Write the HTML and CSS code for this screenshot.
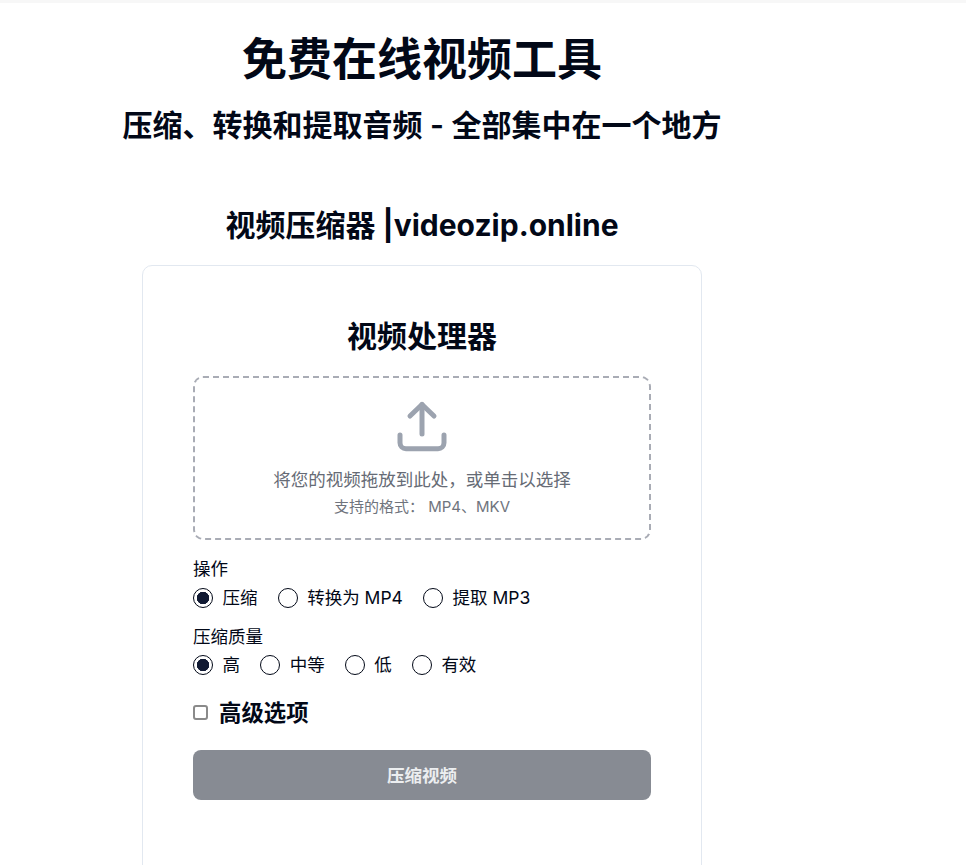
FILE: index.html
```html
<!DOCTYPE html>
<html lang="zh-CN">
<head>
  <meta charset="UTF-8">
  <meta name="viewport" content="width=device-width, initial-scale=1.0">
  <title>免费在线视频工具</title>
  <link rel="stylesheet" href="styles.css">
</head>
<body>
  <div class="page">
    <h1>免费在线视频工具</h1>
    <h2 class="subtitle">压缩、转换和提取音频 - 全部集中在一个地方</h2>
    <h2 class="site-name">视频压缩器 |videozip.online</h2>

    <div class="card">
      <h2 class="card-title">视频处理器</h2>

      <div class="dropzone">
        <svg class="upload-icon" viewBox="0 0 52 52" fill="none" stroke="#9ca3af" stroke-width="5" stroke-linecap="round" stroke-linejoin="round">
          <path d="M26 33V3.5"/>
          <path d="M14 15L26 3.5 38 15"/>
          <path d="M4 34v7.8a6 6 0 0 0 6 6h32a6 6 0 0 0 6-6V34"/>
        </svg>
        <p class="drop-text">将您的视频拖放到此处，或单击以选择</p>
        <p class="drop-hint">支持的格式： MP4、MKV</p>
      </div>

      <div class="field">
        <div class="field-label">操作</div>
        <div class="options">
          <label class="option"><input type="radio" name="action" checked> 压缩</label>
          <label class="option"><input type="radio" name="action"> 转换为 MP4</label>
          <label class="option"><input type="radio" name="action"> 提取 MP3</label>
        </div>
      </div>

      <div class="field">
        <div class="field-label">压缩质量</div>
        <div class="options">
          <label class="option"><input type="radio" name="quality" checked> 高</label>
          <label class="option"><input type="radio" name="quality"> 中等</label>
          <label class="option"><input type="radio" name="quality"> 低</label>
          <label class="option"><input type="radio" name="quality"> 有效</label>
        </div>
      </div>

      <label class="advanced"><input type="checkbox"> <span>高级选项</span></label>

      <button class="submit-btn" disabled>压缩视频</button>
    </div>
  </div>
</body>
</html>
```

FILE: styles.css
```css
* {
  box-sizing: border-box;
}
body {
  margin: 0;
  font-family: Inter, "Noto Sans CJK SC", sans-serif;
  color: #020817;
  background: #ffffff;
  border-top: 3px solid #f7f7f7;
}
.page {
  width: 844px;
  padding-top: 27px;
}
h1, h2, p {
  margin: 0;
  text-align: center;
}
h1 {
  font-size: 45px;
  line-height: 60px;
  font-weight: 700;
}
.subtitle {
  font-size: 30px;
  line-height: 40px;
  font-weight: 600;
  margin-top: 15px;
}
.site-name {
  font-size: 30px;
  line-height: 40px;
  font-weight: 700;
  margin-top: 60px;
}
.card {
  width: 560px;
  height: 640px;
  margin: 20px auto 0;
  padding: 50px;
  border: 1px solid #e2e8f0;
  border-radius: 10px;
}
.card-title {
  font-size: 30px;
  line-height: 40px;
  font-weight: 700;
}
.dropzone {
  margin-top: 20px;
  height: 164px;
  padding-top: 23px;
  border: 2px dashed #a9acb5;
  border-radius: 10px;
  text-align: center;
}
.upload-icon {
  display: block;
  width: 52px;
  height: 52px;
  margin: 0 auto;
}
.drop-text {
  font-size: 17.5px;
  line-height: 24px;
  color: #666b75;
  margin-top: 15px;
}
.drop-hint {
  font-size: 15px;
  line-height: 20px;
  color: #6f747d;
  margin-top: 5px;
}
.field {
  margin-top: 17px;
}
.field + .field {
  margin-top: 15px;
}
.field-label {
  font-size: 17.5px;
  line-height: 24px;
}
.options {
  display: flex;
  gap: 20px;
  margin-top: 5px;
}
.field + .field .options {
  margin-top: 4px;
}
.option {
  display: flex;
  align-items: center;
  gap: 9.6px;
  font-size: 17.5px;
  line-height: 24px;
}
.option input {
  appearance: none;
  width: 20px;
  height: 20px;
  margin: 0;
  border: 1px solid #020817;
  border-radius: 50%;
  background: #ffffff;
}
.option input:checked {
  background: radial-gradient(circle, #111a33 0 6px, #ffffff 6.5px);
}
.advanced {
  display: flex;
  align-items: center;
  gap: 11px;
  margin-top: 20px;
  font-size: 22.4px;
  line-height: 32px;
  font-weight: 600;
}
.advanced input {
  appearance: none;
  width: 15px;
  height: 15px;
  margin: -1px 0 0;
  border: 2px solid #8a8a8a;
  border-radius: 3px;
  background: #ffffff;
}
.submit-btn {
  display: block;
  width: 100%;
  height: 50px;
  margin-top: 21px;
  padding-bottom: 3px;
  border: none;
  border-radius: 8px;
  background: #878b93;
  color: #eceef0;
  font-family: inherit;
  font-size: 17.5px;
  font-weight: 600;
}
```
